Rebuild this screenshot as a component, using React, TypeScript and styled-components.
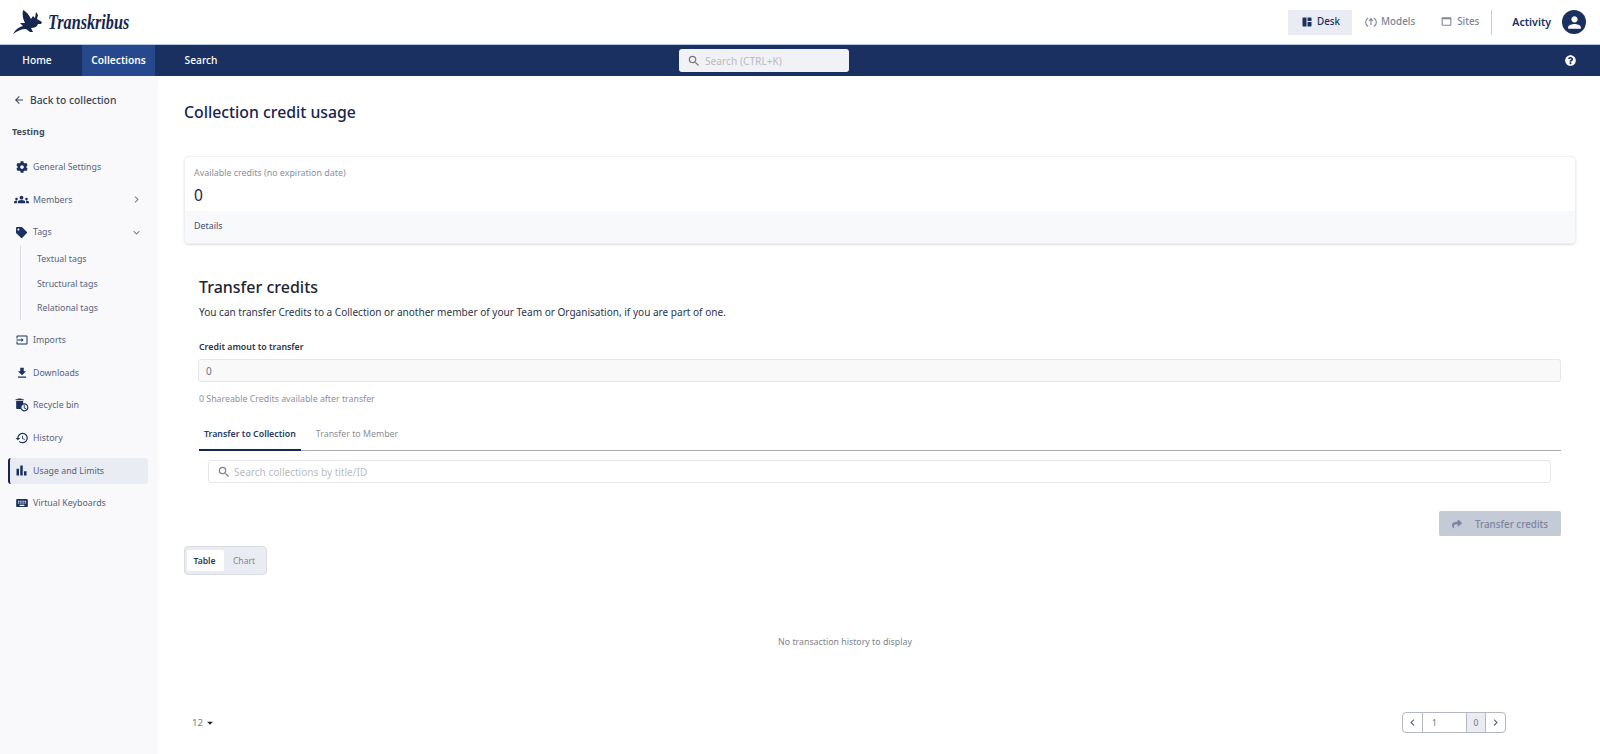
import React from "react";
import styled, { createGlobalStyle } from "styled-components";
import {
  MdArrowBack,
  MdAutoDelete,
  MdBarChart,
  MdChevronRight,
  MdExpandMore,
  MdFileDownload,
  MdGroups,
  MdHistory,
  MdInput,
  MdKeyboard,
  MdOutlineWebAsset,
  MdPerson,
  MdSearch,
  MdSpaceDashboard,
  MdArrowDropDown,
} from "react-icons/md";
import { FaCog, FaQuestionCircle, FaShare, FaTag } from "react-icons/fa";

const GlobalStyle = createGlobalStyle`
  html, body { margin: 0; padding: 0; background: #fff; }
  body { font-family: "Noto Sans", "Open Sans", sans-serif; color: #1a2b52; overflow: hidden; }
  * { box-sizing: border-box; }
`;

const Page = styled.div`
  width: 1600px;
  height: 754px;
  display: flex;
  flex-direction: column;
  overflow: hidden;
`;

const TopBar = styled.header`
  height: 45px;
  flex: none;
  display: flex;
  align-items: center;
  justify-content: space-between;
  padding: 0 14px 0 13px;
  background: #fff;
  border-bottom: 1px solid #b5c7e6;
`;

const Logo = styled.div`
  display: flex;
  align-items: center;
  gap: 5px;
  color: #15264f;
`;

const LogoText = styled.span`
  font-family: "Liberation Serif", serif;
  font-style: italic;
  font-weight: 700;
  font-size: 21px;
  display: inline-block;
  transform: scaleX(0.77);
  transform-origin: left center;
`;

const TopActions = styled.div`
  display: flex;
  align-items: center;
  height: 26px;
`;

const TopTab = styled.div<{ $active?: boolean }>`
  height: 25px;
  display: flex;
  align-items: center;
  gap: 4px;
  padding: 0 12px 1px 13px;
  font-size: 9.8px;
  font-weight: 500;
  color: ${(p) => (p.$active ? "#1a3060" : "#7d8598")};
  background: ${(p) => (p.$active ? "#e9ecf3" : "transparent")};
`;

const Divider = styled.div`
  width: 1px;
  height: 25px;
  background: #c9ccd4;
  margin: 0 20px 0 0;
`;

const Activity = styled.span`
  font-size: 10.6px;
  font-weight: 600;
  color: #1a3060;
  margin-right: 11px;
  padding-bottom: 1px;
`;

const Avatar = styled.div`
  width: 24px;
  height: 24px;
  border-radius: 50%;
  background: #1a3060;
  color: #fff;
  display: flex;
  align-items: center;
  justify-content: center;
`;

const NavBar = styled.nav`
  height: 31px;
  flex: none;
  background: #1a3060;
  display: grid;
  grid-template-columns: 679px 170px 1fr;
  align-items: center;
  color: #fff;
`;

const NavLinks = styled.div`
  display: flex;
  height: 100%;
`;

const NavLink = styled.div<{ $active?: boolean; $w: number; $inset?: number }>`
  width: ${(p) => p.$w}px;
  height: 100%;
  display: flex;
  align-items: center;
  justify-content: center;
  padding: 0 ${(p) => p.$inset ?? 0}px 1px 0;
  font-size: 10.2px;
  font-weight: ${(p) => (p.$active ? 600 : 500)};
  background: ${(p) => (p.$active ? "#25498c" : "transparent")};
`;

const NavSearch = styled.div`
  height: 23px;
  background: #f1f2f5;
  border-radius: 3px;
  display: flex;
  align-items: center;
  gap: 4px;
  padding-left: 8px;
  font-size: 10.2px;
  color: #b8bbc2;
`;

const HelpSlot = styled.div`
  display: flex;
  justify-content: flex-end;
  padding-right: 24px;
`;

const Body = styled.div`
  flex: 1;
  display: flex;
  min-height: 0;
`;

const Sidebar = styled.aside`
  width: 158px;
  flex: none;
  background: #f9f9fb;
  padding-top: 14px;
`;

const BackLink = styled.div`
  height: 20px;
  display: flex;
  align-items: center;
  gap: 5px;
  padding-left: 13px;
  font-size: 10.3px;
  font-weight: 500;
  color: #3a4258;
`;

const CollectionName = styled.div`
  margin: 15px 0 15px 12px;
  font-size: 9px;
  line-height: 14px;
  font-weight: 700;
  color: #3e4a62;
`;

const Item = styled.div<{ $active?: boolean }>`
  height: 25.7px;
  margin: 0 10px 7px 8px;
  padding: 0 5px 0 4px;
  display: flex;
  align-items: center;
  gap: 4px;
  border-radius: 3px;
  font-size: 8.8px;
  color: #58627a;
  background: ${(p) => (p.$active ? "#e9ecf3" : "transparent")};
  border-left: 2px solid ${(p) => (p.$active ? "#15264f" : "transparent")};
`;

const ItemIcon = styled.span`
  display: flex;
  width: 15px;
  justify-content: center;
  color: #1a3060;
`;

const Chevron = styled.span`
  margin-left: auto;
  display: flex;
  color: #7a8294;
`;

const SubList = styled.div`
  margin: -6px 0 7px 20px;
  padding: 1px 0 0 16px;
  height: 74px;
  border-left: 1px solid #d8dbe2;
  display: flex;
  flex-direction: column;
  justify-content: space-between;
`;

const SubItem = styled.div`
  height: 24px;
  display: flex;
  align-items: center;
  font-size: 8.8px;
  color: #58627a;
`;

const Main = styled.main`
  flex: 1;
  min-width: 0;
  padding: 23px 24px 0 26px;
  display: flex;
  flex-direction: column;
`;

const PageTitle = styled.h1`
  margin: 0 0 31px;
  font-size: 15.8px;
  line-height: 26px;
  font-weight: 500;
  color: #15264f;
`;

const CreditCard = styled.section`
  height: 88px;
  flex: none;
  border: 1px solid #eef0f4;
  border-radius: 5px;
  box-shadow: 0 1px 2px rgba(40, 50, 80, 0.16);
  overflow: hidden;
  display: flex;
  flex-direction: column;
`;

const CardTop = styled.div`
  flex: 1;
  padding: 9px 9px 0;
`;

const CardLabel = styled.div`
  font-size: 8.9px;
  line-height: 14px;
  color: #8a8f9b;
`;

const CardValue = styled.div`
  margin-top: 4px;
  font-size: 15.5px;
  line-height: 22px;
  color: #15264f;
`;

const CardFooter = styled.div`
  height: 32px;
  padding: 0 9px 3px;
  display: flex;
  align-items: center;
  background: #f8f9fb;
  font-size: 8.9px;
  color: #3d4c72;
`;

const Transfer = styled.section`
  padding: 31px 15px 0;
  display: flex;
  flex-direction: column;
`;

const SectionTitle = styled.h2`
  margin: 0;
  font-size: 16px;
  line-height: 24px;
  font-weight: 500;
  color: #1f2430;
`;

const SectionText = styled.p`
  margin: 5px 0 0;
  font-size: 10.05px;
  line-height: 16px;
  color: #2c3448;
`;

const FieldLabel = styled.label`
  margin-top: 20px;
  font-size: 8.8px;
  line-height: 14px;
  font-weight: 600;
  color: #2c3448;
`;

const AmountInput = styled.div`
  margin: 5px 0 0 -1px;
  height: 23px;
  background: #f9f9fa;
  border: 1px solid #e6e7ea;
  border-radius: 3px;
  padding-left: 7px;
  display: flex;
  align-items: center;
  font-size: 10px;
  color: #6f7480;
`;

const Hint = styled.div`
  margin-top: 10px;
  font-size: 8.8px;
  line-height: 14px;
  color: #8d919b;
`;

const Tabs = styled.div`
  margin-top: 13px;
  height: 32px;
  display: flex;
  border-bottom: 1px solid #a8abb2;
`;

const Tab = styled.div<{ $active?: boolean }>`
  height: 32px;
  padding: 0 5px ${(p) => (p.$active ? 1 : 3)}px;
  margin-right: ${(p) => (p.$active ? 10 : 0)}px;
  display: flex;
  align-items: center;
  font-size: 8.8px;
  font-weight: ${(p) => (p.$active ? 600 : 400)};
  color: ${(p) => (p.$active ? "#2a3a60" : "#8a8f9b")};
  border-bottom: ${(p) => (p.$active ? "2px solid #15264f" : "none")};
`;

const CollectionSearch = styled.div`
  margin: 9px 10px 0 9px;
  height: 23px;
  border: 1px solid #e6e7ea;
  border-radius: 3px;
  display: flex;
  align-items: center;
  gap: 3px;
  padding-left: 8px;
  font-size: 10.05px;
  color: #b8bbc2;
`;

const SearchGlyph = styled.span`
  display: flex;
  color: #7c808a;
`;

const TransferRow = styled.div`
  margin-top: 28px;
  display: flex;
  justify-content: flex-end;
`;

const TransferButton = styled.button`
  width: 122px;
  height: 25px;
  border: none;
  border-radius: 2px;
  background: #c4cad6;
  color: #7b85a0;
  display: flex;
  align-items: center;
  justify-content: center;
  gap: 13px;
  font-family: inherit;
  font-size: 9.85px;
  font-weight: 500;
  padding: 0;
`;

const ViewSwitch = styled.div`
  margin-top: 10px;
  width: 83px;
  height: 29px;
  flex: none;
  padding: 3px 2px;
  display: flex;
  border-radius: 4px;
  background: #e9ecf3;
  border: 1px solid #d9dce4;
`;

const ViewOption = styled.div<{ $active?: boolean }>`
  flex: ${(p) => (p.$active ? "0 0 37px" : "1")};
  display: flex;
  align-items: center;
  justify-content: center;
  padding-right: ${(p) => (p.$active ? 2 : 0)}px;
  border-radius: 2px;
  font-size: 8.6px;
  font-weight: ${(p) => (p.$active ? 600 : 400)};
  color: ${(p) => (p.$active ? "#2a3a60" : "#7d8598")};
  background: ${(p) => (p.$active ? "#fff" : "transparent")};
`;

const EmptyNote = styled.div`
  margin-top: 60px;
  padding-right: 70px;
  text-align: center;
  font-size: 8.8px;
  line-height: 14px;
  color: #7e828c;
`;

const Footer = styled.div`
  margin-top: 63px;
  height: 21px;
  padding: 0 70px 0 8px;
  display: flex;
  align-items: center;
  justify-content: space-between;
`;

const PageSize = styled.div`
  display: flex;
  align-items: center;
  font-size: 9.7px;
  color: #777c87;
`;

const Pager = styled.div`
  display: flex;
  width: 104px;
  height: 21px;
  border: 1px solid #b4b8c0;
  border-radius: 4px;
  overflow: hidden;
`;

const PagerButton = styled.div`
  width: 19px;
  display: flex;
  align-items: center;
  justify-content: center;
  color: #555b69;
`;

const PagerInput = styled.div`
  flex: 1;
  border-left: 1px solid #b4b8c0;
  padding-left: 9px;
  display: flex;
  align-items: center;
  font-size: 8.5px;
  color: #6f7480;
`;

const PagerTotal = styled.div`
  width: 20px;
  border-left: 1px solid #b4b8c0;
  border-right: 1px solid #b4b8c0;
  background: #e9ecf3;
  display: flex;
  align-items: center;
  justify-content: center;
  font-size: 8.5px;
  color: #6f7480;
`;

// rough drawing of the winged horse from the logo
const Pegasus = () => (
  <svg width="30" height="26" viewBox="0 0 30 26" fill="#15264f">
    <path d="M0 25 C3 20 6 18 10 17 L7 14 L12 14 C10 10 9 6 10 1 C14 3 16 6 18 10 L20 7 L22 9 L23 3 L25 6 L24 10 L29 13 L28 15 L25 15 C24 18 21 19 18 19 L20 23 L17 23 L13 20 C8 20 4 22 0 25 Z" />
  </svg>
);

// the up arrow in a broken circle on the Models tab
const ModelsIcon = () => (
  <svg width="12" height="12" viewBox="0 0 12 12" fill="none" stroke="currentColor" strokeWidth="1.1">
    <path d="M3.2 2 A4.8 4.8 0 0 0 3.2 10.5 M8.8 2 A4.8 4.8 0 0 1 8.8 10.5" />
    <path d="M6 9 V3 M4 5 L6 2.6 L8 5" />
  </svg>
);

// white disc with a small dark question mark, as in the nav bar
const HelpIcon = () => <FaQuestionCircle size={11} />;

export default function App() {
  return (
    <Page>
      <GlobalStyle />
      <TopBar>
        <Logo>
          <Pegasus />
          <LogoText>Transkribus</LogoText>
        </Logo>
        <TopActions>
          <TopTab $active>
            <MdSpaceDashboard size={12} />
            Desk
          </TopTab>
          <TopTab>
            <ModelsIcon />
            Models
          </TopTab>
          <TopTab>
            <MdOutlineWebAsset size={13} />
            Sites
          </TopTab>
          <Divider />
          <Activity>Activity</Activity>
          <Avatar>
            <MdPerson size={19} />
          </Avatar>
        </TopActions>
      </TopBar>
      <NavBar>
        <NavLinks>
          <NavLink $w={82} $inset={8}>Home</NavLink>
          <NavLink $w={73} $active>
            Collections
          </NavLink>
          <NavLink $w={92}>Search</NavLink>
        </NavLinks>
        <NavSearch>
          <MdSearch size={14} color="#777" />
          Search (CTRL+K)
        </NavSearch>
        <HelpSlot>
          <HelpIcon />
        </HelpSlot>
      </NavBar>
      <Body>
        <Sidebar>
          <BackLink>
            <MdArrowBack size={12} />
            Back to collection
          </BackLink>
          <CollectionName>Testing</CollectionName>
          <Item>
            <ItemIcon><FaCog size={12} /></ItemIcon>
            General Settings
          </Item>
          <Item>
            <ItemIcon><MdGroups size={15} /></ItemIcon>
            Members
            <Chevron><MdChevronRight size={13} /></Chevron>
          </Item>
          <Item>
            <ItemIcon><FaTag size={11} /></ItemIcon>
            Tags
            <Chevron><MdExpandMore size={13} /></Chevron>
          </Item>
          <SubList>
            <SubItem>Textual tags</SubItem>
            <SubItem>Structural tags</SubItem>
            <SubItem>Relational tags</SubItem>
          </SubList>
          <Item>
            <ItemIcon><MdInput size={12} /></ItemIcon>
            Imports
          </Item>
          <Item>
            <ItemIcon><MdFileDownload size={14} /></ItemIcon>
            Downloads
          </Item>
          <Item>
            <ItemIcon><MdAutoDelete size={14} /></ItemIcon>
            Recycle bin
          </Item>
          <Item>
            <ItemIcon><MdHistory size={14} /></ItemIcon>
            History
          </Item>
          <Item $active>
            <ItemIcon><MdBarChart size={15} /></ItemIcon>
            Usage and Limits
          </Item>
          <Item>
            <ItemIcon><MdKeyboard size={14} /></ItemIcon>
            Virtual Keyboards
          </Item>
        </Sidebar>
        <Main>
          <PageTitle>Collection credit usage</PageTitle>
          <CreditCard>
            <CardTop>
              <CardLabel>Available credits (no expiration date)</CardLabel>
              <CardValue>0</CardValue>
            </CardTop>
            <CardFooter>Details</CardFooter>
          </CreditCard>
          <Transfer>
            <SectionTitle>Transfer credits</SectionTitle>
            <SectionText>
              You can transfer Credits to a Collection or another member of your Team or Organisation, if you are part of one.
            </SectionText>
            <FieldLabel>Credit amout to transfer</FieldLabel>
            <AmountInput>0</AmountInput>
            <Hint>0 Shareable Credits available after transfer</Hint>
            <Tabs>
              <Tab $active>Transfer to Collection</Tab>
              <Tab>Transfer to Member</Tab>
            </Tabs>
            <CollectionSearch>
              <SearchGlyph><MdSearch size={14} /></SearchGlyph>
              Search collections by title/ID
            </CollectionSearch>
            <TransferRow>
              <TransferButton>
                <FaShare size={10} />
                Transfer credits
              </TransferButton>
            </TransferRow>
          </Transfer>
          <ViewSwitch>
            <ViewOption $active>Table</ViewOption>
            <ViewOption>Chart</ViewOption>
          </ViewSwitch>
          <EmptyNote>No transaction history to display</EmptyNote>
          <Footer>
            <PageSize>
              12
              <MdArrowDropDown size={14} color="#222" />
            </PageSize>
            <Pager>
              <PagerButton><MdChevronRight size={13} style={{ transform: "rotate(180deg)" }} /></PagerButton>
              <PagerInput>1</PagerInput>
              <PagerTotal>0</PagerTotal>
              <PagerButton><MdChevronRight size={13} /></PagerButton>
            </Pager>
          </Footer>
        </Main>
      </Body>
    </Page>
  );
}
